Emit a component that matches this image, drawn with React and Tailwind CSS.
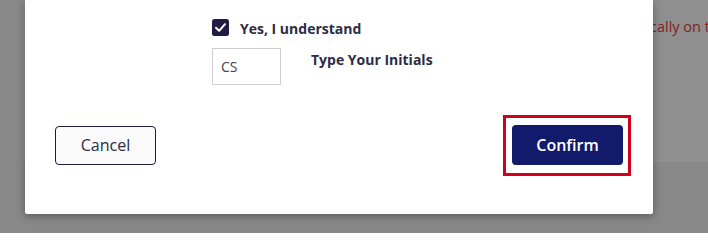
import React from "react";

const CheckIcon = () => (
  <svg width="17" height="17" viewBox="0 0 17 17" className="shrink-0">
    <rect x="0" y="0" width="17" height="17" rx="2.5" fill="#1f1e42" />
    <path d="M4 8.8 L7.1 11.8 L13 5.2" fill="none" stroke="#fff" strokeWidth="2" strokeLinecap="round" strokeLinejoin="round" />
  </svg>
);

const App = () => {
  return (
    <div className="relative w-full h-[233px] overflow-hidden bg-[#888888] font-['Open_Sans',sans-serif]">
      {/* dimmed page behind the dialog */}
      <div className="ml-[22px] h-[162px] bg-[#8f8f8f] border-l border-[#858585]">
        <p className="pt-[16px] pl-[627px] whitespace-nowrap text-[14.5px] text-[#861c22]">
          cally on the scheduled date
        </p>
      </div>

      {/* dialog */}
      <div className="absolute top-0 left-[25px] w-[628px] h-[214px] bg-white rounded-b-[2px] shadow-[0_2px_8px_rgba(0,0,0,0.35)] px-[30px] flex flex-col">
        <div className="pl-[157px] pt-[19px]">
          <label className="flex items-center gap-[11px] h-[17px]">
            <CheckIcon />
            <span className="pt-[3px] text-[14px] font-bold text-[#2c2c47] leading-none">Yes, I understand</span>
          </label>
          <div className="flex items-start mt-[12px]">
            <input
              defaultValue="CS"
              className="w-[69px] h-[37px] border border-[#cfcfcf] px-[8px] text-[14px] text-[#3f3f58] outline-none"
            />
            <span className="ml-[30px] mt-[1px] text-[14px] font-bold text-[#2c2c47]">Type Your Initials</span>
          </div>
        </div>

        <div className="flex justify-between items-center mt-[40px]">
          <button className="w-[101px] h-[39px] border border-[#1c1c3c] rounded-[4px] bg-[#fafafa] text-[16px] text-[#2c2c47]">
            Cancel
          </button>
          <div className="relative">
            <button className="w-[111px] h-[40px] rounded-[4px] bg-[#121b6b] text-[16px] font-semibold text-white">
              Confirm
            </button>
            <div className="absolute -left-[9px] -right-[8px] -top-[10px] -bottom-[11px] border-[3px] border-[#d0021b]" />
          </div>
        </div>
      </div>
    </div>
  );
};

export default App;
